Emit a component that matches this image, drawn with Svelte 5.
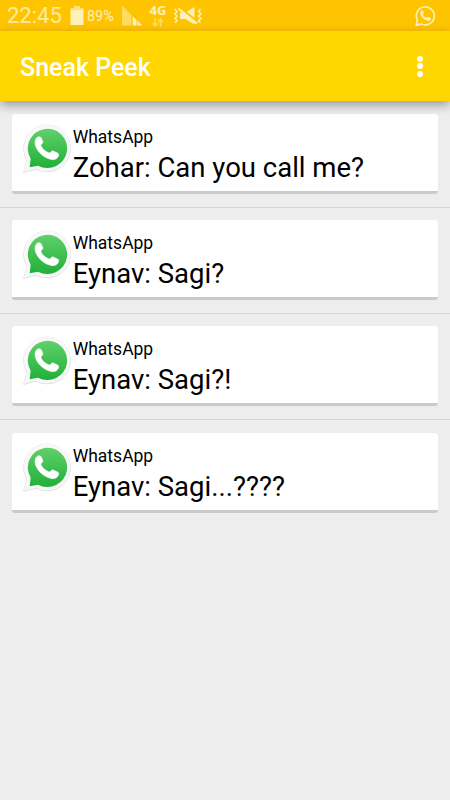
<script>
  let battery = 89;
  let time = "22:45";

  let notifications = [
    { app: "WhatsApp", text: "Zohar: Can you call me?" },
    { app: "WhatsApp", text: "Eynav: Sagi?" },
    { app: "WhatsApp", text: "Eynav: Sagi?!" },
    { app: "WhatsApp", text: "Eynav: Sagi...????" },
  ];
</script>

<div class="screen">
  <div class="status-bar">
    <span class="time">{time}</span>
    <svg class="battery" width="14" height="21" viewBox="0 0 14 21">
      <path d="M4 1h6v2H4z" fill="#ffe17a" />
      <path d="M0.5 3h13v3h-13z" fill="#ffe17a" />
      <path d="M0.5 5h13v15h-13z" fill="#fff0b8" />
    </svg>
    <span class="percent">{battery}%</span>
    <svg class="signal" width="21" height="21" viewBox="0 0 21 21">
      <path d="M0 0.5 L9 9.5 V20.5 H0z" fill="#ffdb62" />
      <path d="M9 10l2 1v9.500h-2z" fill="#ffcf2c" />
      <path d="M11 11.500l3.500 3.500v5.500h-3.500z M15.500 15.500l4.500 5h-4.500z" fill="#fff0b8" />
    </svg>
    <div class="network">
      <span>4G</span>
      <svg width="12" height="9" viewBox="0 0 12 9">
        <path d="M3 0v8M0.700 5.200L3 8l2.300-2.800M8.500 9V1M6.200 3.800l2.300-2.800 2.300 2.800" />
      </svg>
    </div>
    <svg class="vibrate" width="30" height="20" viewBox="0 0 30 20">
      <path d="M7 6.500h5.500L21.500 1v17.500l-9-5.500H7z" fill="#fff0b8" />
      <path d="M5.500 0.500L24.500 16" stroke="#ffc400" stroke-width="2.500" />
      <path d="M5.500 2.500L24 17.500" stroke="#fff0b8" stroke-width="2" />
      <path
        d="M1.500 3l2.500 2.500-2 2.300 2 2.400-2 2.300 2 2.300-2 2M27.500 3l-2 2.500 2.500 2.300-2.500 2.400 2.500 2.300-2.500 2.300 2 2"
        fill="none"
        stroke="#fff0b8"
        stroke-width="1.500"
      />
    </svg>
    <svg class="whatsapp-outline" width="21" height="22" viewBox="0 0 21 22">
      <path
        d="M1.200 20.500l1.300-5.200A9 9 0 1 1 6.300 18.900z"
        fill="none"
        stroke="#fff0b8"
        stroke-width="1.700"
        stroke-linejoin="round"
      />
      <path
        transform="translate(10.700 10.700) scale(0.150)"
        d="M-36-18C-36-27-31-34-25-35C-18-35-17-33-12-19C-12-15-20-12-18-7C-13 3-4 10 7 14C12 14 14 5 19 8C32 14 36 15 35 20C34 29 26 34 18 34C-8 33-36 6-36-18z"
        fill="#fff0b8"
      />
    </svg>
  </div>

  <header class="app-bar">
    <h1>Sneak Peek</h1>
    <button class="menu" aria-label="More options">
      <i></i><i></i><i></i>
    </button>
  </header>

  <ul class="list">
    {#each notifications as item}
      <li>
        <div class="card">
          <svg class="icon" width="50" height="52" viewBox="-75 -73 150 156">
            <defs>
              <linearGradient id="green" x1="0" y1="0" x2="0" y2="1">
                <stop offset="0" stop-color="#61d06b" />
                <stop offset="1" stop-color="#20b038" />
              </linearGradient>
            </defs>
            <path
              d="M-70 72L-60 36A70 70 0 1 1-33 62z"
              fill="#dcdcdc"
              stroke="#dcdcdc"
              stroke-width="3"
              stroke-linejoin="round"
            />
            <path d="M-70 71L-60 35A70 70 0 1 1-33 61z" fill="#f8f8f8" />
            <path d="M-52 57L-49 31A59 59 0 1 1-27 52z" fill="url(#green)" />
            <path
              d="M-36-18C-36-27-31-34-25-35C-18-35-17-33-12-19C-12-15-20-12-18-7C-13 3-4 10 7 14C12 14 14 5 19 8C32 14 36 15 35 20C34 29 26 34 18 34C-8 33-36 6-36-18z"
              fill="#fff"
              stroke="#fff"
              stroke-width="1.500"
            />
          </svg>
          <div class="content">
            <p class="app-name">{item.app}</p>
            <p class="message">{item.text}</p>
          </div>
        </div>
      </li>
    {/each}
  </ul>
</div>

<style>
  :global(body) {
    background-color: #ededed;
  }

  .screen {
    height: 800px;
    overflow: hidden;
    font-family: Roboto, sans-serif;
    background-color: #ededed;
  }

  .status-bar {
    display: flex;
    align-items: flex-start;
    box-sizing: border-box;
    height: 31px;
    padding: 0 14px 0 7px;
    color: #fff0b8;
    background-color: #ffc400;
  }

  .time {
    width: 63px;
    font-size: 22px;
    font-weight: 400;
    line-height: 32px;
    white-space: nowrap;
    color: #ffeba0;
  }

  .battery {
    margin-top: 5px;
  }

  .percent {
    width: 35px;
    margin-left: 3px;
    font-size: 14.4px;
    line-height: 33px;
  }

  .signal {
    margin-top: 5px;
  }

  .network {
    display: flex;
    flex-direction: column;
    align-items: center;
    width: 18px;
    margin: 3px 0 0 6px;
    font-family: "Open Sans", sans-serif;
    font-size: 13px;
    font-weight: 700;
    line-height: 14px;
  }

  .network svg {
    margin-top: 1px;
    fill: none;
    stroke: #ffdb62;
    stroke-width: 1.8;
  }

  .vibrate {
    margin: 6px 0 0 6px;
  }

  .whatsapp-outline {
    margin: 5px 0 0 auto;
  }

  .app-bar {
    position: relative;
    display: flex;
    align-items: center;
    justify-content: space-between;
    box-sizing: border-box;
    height: 70px;
    padding: 0 15px 0 20px;
    background-color: #ffd600;
    box-shadow: 0 4px 10px rgba(0, 0, 0, 0.36);
  }

  h1 {
    margin: 3px 0 0;
    color: #fff;
    font-size: 25px;
    font-weight: 500;
    line-height: 30px;
  }

  .menu {
    display: flex;
    flex-direction: column;
    align-items: center;
    gap: 1.5px;
    width: 30px;
    padding: 0;
    border: none;
    background: none;
  }

  .menu i {
    width: 6px;
    height: 6px;
    border-radius: 50%;
    background-color: #fff;
  }

  .list {
    margin: 0;
    padding: 0;
    list-style: none;
  }

  li {
    box-sizing: border-box;
    height: 106.2px;
    padding: 12.5px 12.3px 0;
  }

  li:not(:first-child) {
    border-top: 1px solid #d5d5d5;
    padding-top: 12.2px;
  }

  li:first-child {
    height: 106px;
  }

  .card {
    display: flex;
    align-items: flex-start;
    box-sizing: border-box;
    height: 80px;
    padding: 10px 0 0 10px;
    border-bottom: 3px solid #cacaca;
    border-radius: 3px;
    background-color: #fff;
  }

  .icon {
    flex: none;
  }

  .content {
    padding: 1px 0 0 0.4px;
    color: #000;
    white-space: nowrap;
  }

  p {
    margin: 0;
  }

  .app-name {
    font-size: 17.5px;
    line-height: 24px;
  }

  .message {
    font-size: 27.5px;
    line-height: 37px;
  }
</style>
